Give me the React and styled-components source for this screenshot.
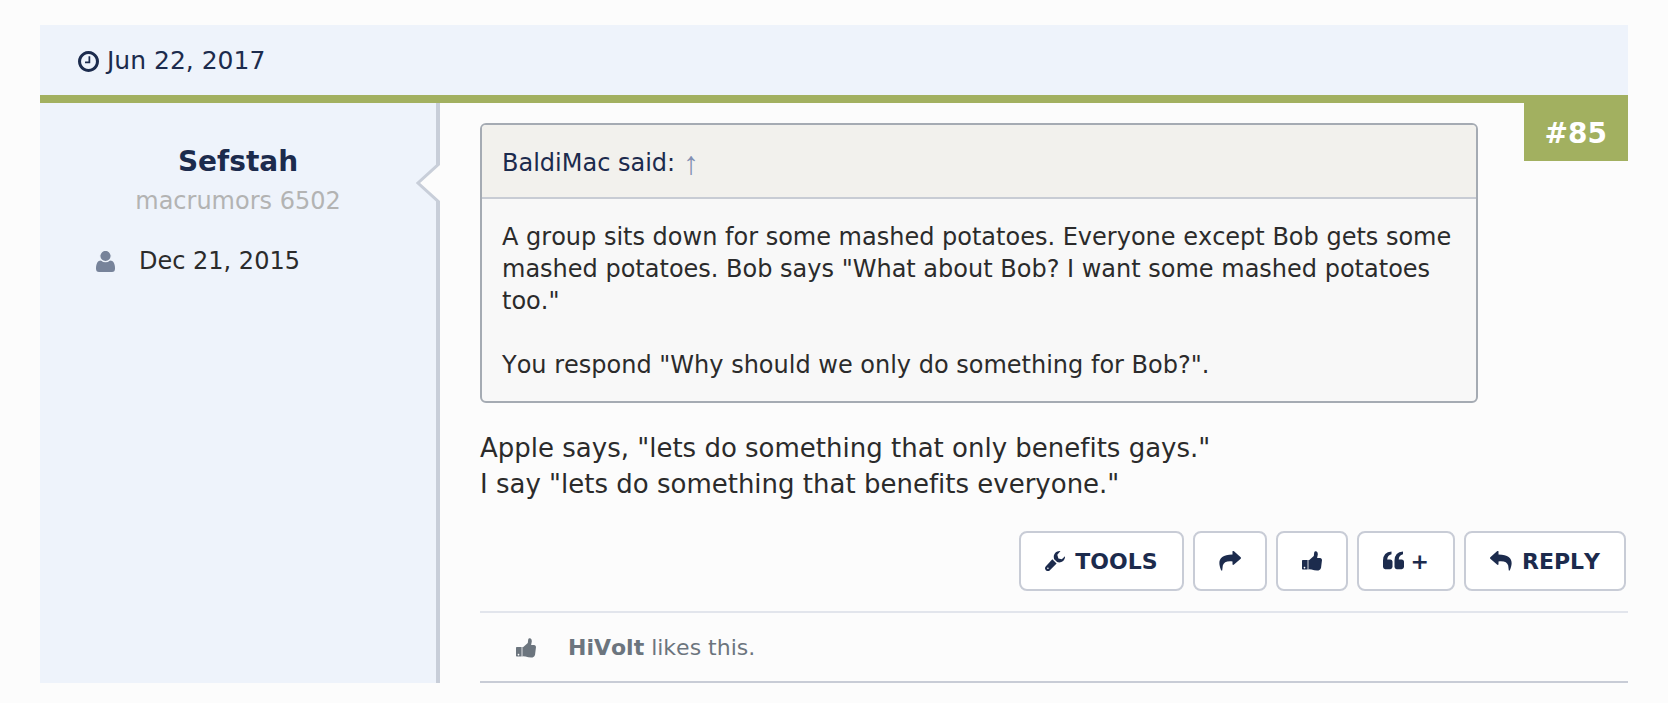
import React from "react"
import styled, { createGlobalStyle } from "styled-components"

const GlobalStyle = createGlobalStyle`
    * {
        box-sizing: border-box;
    }

    body {
        margin: 0;
        background-color: #fcfcfc;
        color: #2b2b2b;
        font-family: Verdana, "DejaVu Sans", sans-serif;
        font-size: 24px;
        font-kerning: none;
        font-variant-ligatures: none;
        line-height: 32px;
    }

    a {
        color: inherit;
        text-decoration: none;
    }

    svg {
        display: block;
        flex: none;
        fill: currentColor;
    }
`

const Page = styled.main`
    padding: 25px 40px 20px;
`

const PostHeader = styled.header`
    display: flex;
    align-items: center;
    gap: 8px;
    padding: 20px 38px 18px;
    background-color: #eef3fb;
    color: #1c2b4d;
    border-bottom: 8px solid #a2b060;
    font-size: 25px;
`

const PostBody = styled.article`
    display: flex;
`

const UserPanel = styled.aside`
    position: relative;
    flex: 0 0 400px;
    padding: 41px 0;
    background-color: #eef3fb;
    border-right: 4px solid #c8ced9;
    text-align: center;
`

const Pointer = styled.svg`
    position: absolute;
    top: 60px;
    right: -4px;
`

const UserName = styled.a`
    display: block;
    color: #1c2b4d;
    font-size: 28px;
    font-weight: bold;
    line-height: 36px;
`

const UserTitle = styled.div`
    margin-top: 5px;
    color: #b3b3b3;
`

const Joined = styled.div`
    display: flex;
    align-items: center;
    gap: 24px;
    margin-top: 28px;
    padding-left: 56px;

    svg {
        color: #77839a;
    }
`

const Content = styled.section`
    position: relative;
    flex: 1;
    margin-left: 40px;
    padding-top: 20px;
    border-bottom: 2px solid #c8ccd6;
`

const PostNumber = styled.a`
    position: absolute;
    top: -8px;
    right: 0;
    padding: 21px 21px 9px;
    background-color: #a2b060;
    color: #ffffff;
    font-size: 28px;
    font-weight: bold;
    line-height: 36px;
`

const Quote = styled.blockquote`
    margin: 0 150px 0 0;
    border: 2px solid #a5abb3;
    border-radius: 6px;
    background-color: #f8f8f8;
    overflow: hidden;
`

const QuoteHeader = styled.div`
    display: flex;
    align-items: center;
    gap: 8px;
    padding: 22px 20px 18px;
    background-color: #f2f1ed;
    border-bottom: 2px solid #c8ccd4;
    color: #1c2b4d;
`

const Arrow = styled.a`
    && {
        color: #8290b3;
    }
    font-family: "Liberation Sans", Arial, sans-serif;
    font-size: 32px;
`

const QuoteText = styled.p`
    margin: 0;
    padding: 22px 20px 20px;
    white-space: pre-line;
`

const Message = styled.p`
    margin: 27px 0 0;
    font-size: 26px;
    line-height: 36px;
    white-space: pre-line;
`

const Controls = styled.div`
    display: flex;
    justify-content: flex-end;
    gap: 9px;
    margin-top: 29px;
    padding: 0 2px 20px 0;
`

const Button = styled.button`
    display: flex;
    align-items: center;
    gap: 10px;
    height: 60px;
    padding: 0 24px;
    border: 2px solid #c8ccd6;
    border-radius: 8px;
    background-color: #ffffff;
    color: #1c2b4d;
    font-family: inherit;
    font-size: 22px;
    font-weight: bold;
    font-kerning: none;
`

const QuoteButton = styled(Button)`
    gap: 7px;
`

const Likes = styled.div`
    display: flex;
    align-items: center;
    gap: 32px;
    padding: 19px 36px 17px;
    border-top: 2px solid #e2e5ec;
    color: #6c757e;
    font-size: 22px;
`

const ClockIcon = () => (
    <svg width="21" height="21" viewBox="128 128 1536 1536" aria-hidden="true">
        <path d="M1024 544v448q0 14-9 23t-23 9h-320q-14 0-23-9t-9-23v-64q0-14 9-23t23-9h224v-352q0-14 9-23t23-9h64q14 0 23 9t9 23zm416 352q0-148-73-273t-198-198-273-73-273 73-198 198-73 273 73 273 198 198 273 73 273-73 198-198 73-273zm224 0q0 209-103 385.5t-279.5 279.5-385.5 103-385.5-103-279.5-279.5-103-385.5 103-385.5 279.5-279.5 385.5-103 385.5 103 279.5 279.5 103 385.5z" />
    </svg>
)

const UserIcon = () => (
    <svg width="19" height="21" viewBox="0 0 19 21" aria-hidden="true">
        <path d="M5 9.500h9c3.500 0 5 3.500 5 8q0 3.500-3 3.500h-13q-3 0-3-3.500c0-4.500 1.500-8 5-8z" />
        <circle cx="9.500" cy="5" r="5.700" stroke="#eef3fb" strokeWidth="1.200" />
    </svg>
)

const WrenchIcon = () => (
    <svg width="20" height="20" viewBox="0 0 20 20" aria-hidden="true">
        <path d="M7.300 8.200l4.300 4.300-7 6.900q-1.900 1.400-3.800-.1-1.600-2-.1-3.900z" />
        <path d="M15.500 0C10.500-.200 7.600 4 9.200 8.200l2.900 2.900C16 12.700 20.400 9.800 20 5.200L16.800 8.300 13.400 7.600 12.300 3.800z" />
        <circle cx="2.900" cy="17.200" r="0.800" fill="#ffffff" />
    </svg>
)

const ShareIcon = () => (
    <svg width="22" height="20" viewBox="0 0 22 20" aria-hidden="true">
        <path d="M13.500 0.300Q14.200-.600 15 .3L21.700 6.200Q22.300 7 21.700 7.700L15 13.600Q14.200 14.400 13.500 13.600V10.500C8 9.800 4.800 11.300 3.800 14.500L3.200 19.500H2.200C-1.500 11-.500 3.500 13.500 3.500z" />
    </svg>
)

const ReplyIcon = () => (
    <svg width="22" height="20" viewBox="0 0 22 20" aria-hidden="true">
        <path d="M8.500 0.300Q7.800-.600 7 .3L.300 6.200Q-.300 7 .3 7.700L7 13.600Q7.800 14.400 8.500 13.600V10.500C14 9.800 17.200 11.300 18.200 14.500L18.800 19.500H19.800C23.500 11 22.500 3.500 8.500 3.500z" />
    </svg>
)

const LikeIcon = () => (
    <svg width="20" height="20" viewBox="0 0 20 20" aria-hidden="true">
        <path fillRule="evenodd" d="M.8 9H5V18.500H.8Q0 18.500 0 17.700V9.800Q0 9 .8 9zM2.500 15.700a.8.8 0 1 0 .01 0z" />
        <path d="M5 9h2v9.500h-2z" opacity="0.600" />
        <path d="M7 9.300L11.800 4.900 12.200 1.400Q12.700-.200 14.200.3 16 .9 15.800 3.500L15.100 6.900 18.300 7.100Q20 7.400 20 9.100L19 17Q18.500 19 16.500 19.400 13 19.700 9.500 18.500L7 18.300z" />
    </svg>
)

const QuoteIcon = () => (
    <svg width="21" height="20" viewBox="0 0 21 20" aria-hidden="true">
        <path d="M8.500.5v2.800q-4 .9-4.300 5.200h3q2 0 2.300 2v5.500q-.3 2-2.300 2.200h-5q-2-.2-2.200-2.200v-6.500q.2-8.500 8.500-9z" />
        <path d="M20 .5v2.800q-4 .9-4.300 5.200h3q2 0 2.300 2v5.500q-.3 2-2.300 2.200h-5q-2-.2-2.200-2.200v-6.500q.2-8.500 8.500-9z" />
    </svg>
)

const quoteText = `A group sits down for some mashed potatoes. Everyone except Bob gets some mashed potatoes. Bob says "What about Bob? I want some mashed potatoes too."

You respond "Why should we only do something for Bob?".`

const messageText = `Apple says, "lets do something that only benefits gays."
I say "lets do something that benefits everyone."`

const App = () => {
    return (
        <>
            <GlobalStyle />
            <Page>
                <PostHeader>
                    <ClockIcon />
                    <time>Jun 22, 2017</time>
                </PostHeader>
                <PostBody>
                    <UserPanel>
                        <Pointer width="24" height="40" viewBox="0 0 24 40" aria-hidden="true">
                            <path d="M24 0L2 20L24 40z" fill="#fcfcfc" />
                            <path d="M25 -1L2 20L25 41" fill="none" stroke="#c8ced9" strokeWidth="3" />
                        </Pointer>
                        <UserName href="#user">Sefstah</UserName>
                        <UserTitle>macrumors 6502</UserTitle>
                        <Joined>
                            <UserIcon />
                            <time>Dec 21, 2015</time>
                        </Joined>
                    </UserPanel>
                    <Content>
                        <PostNumber href="#post-85">#85</PostNumber>
                        <Quote>
                            <QuoteHeader>
                                <span>BaldiMac said:</span>
                                <Arrow href="#quoted">↑</Arrow>
                            </QuoteHeader>
                            <QuoteText>{quoteText}</QuoteText>
                        </Quote>
                        <Message>{messageText}</Message>
                        <Controls>
                            <Button><WrenchIcon />TOOLS</Button>
                            <Button aria-label="Share"><ShareIcon /></Button>
                            <Button aria-label="Like"><LikeIcon /></Button>
                            <QuoteButton aria-label="Multi-quote"><QuoteIcon />+</QuoteButton>
                            <Button><ReplyIcon />REPLY</Button>
                        </Controls>
                        <Likes>
                            <LikeIcon />
                            <span><b>HiVolt</b> likes this.</span>
                        </Likes>
                    </Content>
                </PostBody>
            </Page>
        </>
    )
}

export default App
